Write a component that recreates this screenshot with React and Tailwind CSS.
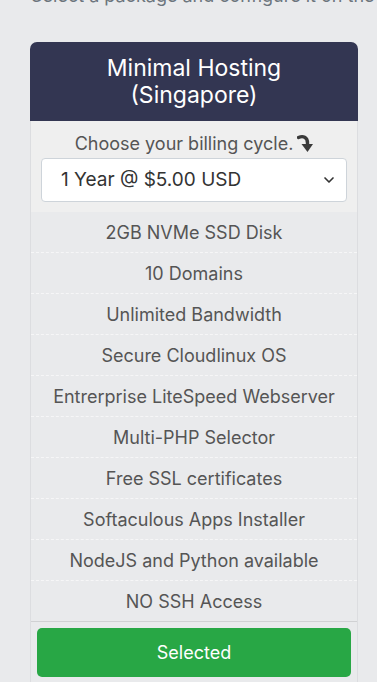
import { ChevronDown } from "lucide-react";

const features = [
  "2GB NVMe SSD Disk",
  "10 Domains",
  "Unlimited Bandwidth",
  "Secure Cloudlinux OS",
  "Entrerprise LiteSpeed Webserver",
  "Multi-PHP Selector",
  "Free SSL certificates",
  "Softaculous Apps Installer",
  "NodeJS and Python available",
  "NO SSH Access",
];

function TurnArrow() {
  return (
    <svg width="16" height="19" viewBox="0 0 16 19" className="inline-block ml-[4px] align-[-3px]">
      <path
        d="M1.5 3.5 C6 1.5 10.5 3 10.5 9 L10.5 11"
        fill="none"
        stroke="#3a3a3a"
        strokeWidth="3.4"
        strokeLinecap="round"
      />
      <path d="M4.5 10 L10.5 18 L16 10 Z" fill="#3a3a3a" />
    </svg>
  );
}

export default function App() {
  return (
    <div
      className="min-h-screen overflow-hidden bg-[#e9eaec]"
      style={{ fontFamily: "Inter, 'Noto Sans', sans-serif" }}
    >
      <p className="-mt-[16px] pl-[31px] text-[18px] leading-6 text-[#6c757d] whitespace-nowrap">
        Select a package and configure it on the next page.
      </p>

      <div className="ml-[30px] mt-[34px] w-[328px]">
        <div className="rounded-t-[7px] bg-[#333652] px-4 pt-[13px] pb-[12px] text-center text-[23px] leading-[27px] text-white">
          Minimal Hosting
          <br />
          (Singapore)
        </div>

        <div className="border-x border-[#dcdde0] bg-[#e9eaec]">
          <div className="bg-[#efefef] px-[10px] pt-[11px] pb-[10px] text-center">
            <div className="text-[18px] leading-[24px] text-[#555]">
              Choose your billing cycle.
              <TurnArrow />
            </div>
            <div className="mt-[2px] flex h-[44px] items-center justify-between rounded-[4px] border border-[#ced4da] bg-white pl-[19px] pr-[9px] text-[19px] text-[#333]">
              <span>1 Year @ $5.00 USD</span>
              <ChevronDown size={16} strokeWidth={2.5} className="text-[#333]" />
            </div>
          </div>

          <ul>
            {features.map((f, i) => (
              <li
                key={f}
                className={
                  "flex h-[41px] items-center justify-center text-[18px] text-[#555] " +
                  (i === features.length - 1
                    ? "border-b border-[#d0d1d3]"
                    : "border-b border-dashed border-[#f6f6f7]")
                }
              >
                {f}
              </li>
            ))}
          </ul>

          <div className="px-[6px] pt-[6px] pb-[6px]">
            <button className="h-[49px] w-full rounded-[5px] bg-[#28a745] text-[18px] text-white">
              Selected
            </button>
          </div>
        </div>
      </div>
    </div>
  );
}
